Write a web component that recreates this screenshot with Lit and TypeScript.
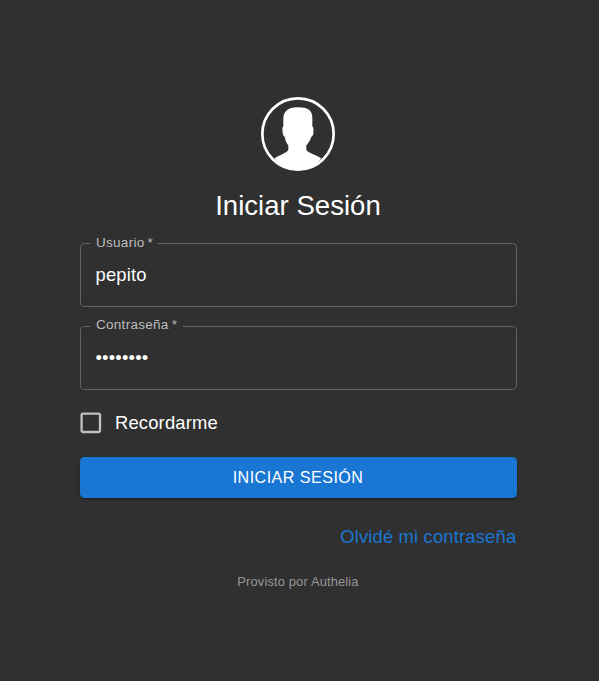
import { LitElement, html, css, svg } from "lit";
import { customElement, property } from "lit/decorators.js";

@customElement("outlined-field")
class OutlinedField extends LitElement {
  @property() label = "";
  @property() value = "";
  @property({ reflect: true }) type = "text";

  static styles = css`
    :host { display: block; position: relative; height: 64px; }
    .outline {
      position: absolute; left: 0; right: 0; top: -6px; bottom: 0;
      margin: 0; padding: 0 9px; box-sizing: border-box; min-width: 0;
      border: 1px solid #646464; border-radius: 4.6px; pointer-events: none;
    }
    .legend {
      padding: 0 5px 0 6px; height: 13px; line-height: 11px;
      font-size: 13.5px; letter-spacing: 0.28px; color: #bcbcbc; white-space: nowrap;
    }
    :host([type="password"]) .legend { line-height: 9px; padding-right: 6px; }
    .star { margin-left: -1px; }
    .input {
      display: block; box-sizing: border-box; width: 100%; height: 64px;
      margin: 0; padding: 0 15px 1px 15.5px; border: 0; outline: 0; background: transparent;
      color: #fff; font: 18.4px/26px "Liberation Sans", Arial, sans-serif;
      letter-spacing: 0.17px;
    }
  `;

  render() {
    return html`
      <fieldset class="outline"><legend class="legend">${this.label} <span class="star">*</span></legend></fieldset>
      <input class="input" .type=${this.type} .value=${this.value} aria-label=${this.label} />
    `;
  }
}

const userIcon = svg`
  <circle cx="144" cy="147" r="107" fill="none" stroke="#fff" stroke-width="8"/>
  <path fill="#fff" d="M144 67C128 67 117 70 109 77C102 83 100 91 100 101L100 124C96 127 97 134 98 143C99 150 101 153 104 155C106 167 110 174 115 181L115 195C110 203 89 210 73 220C91 243 117 256 144 256C171 256 197 243 214 220C199 210 174 203 169 195L169 181C175 174 181 166 184 155C188 153 190 149 190 143C191 134 191 127 187 124L187 99C187 89 184 81 178 75C170 69 159 67 144 67Z"/>`;

@customElement("app-root")
class AppRoot extends LitElement {
  static styles = css`
    :host {
      display: flex; justify-content: center; box-sizing: border-box;
      height: 681px; padding: 97px 2px 0 0; background: #303030; color: #fff;
      font-family: "Liberation Sans", Arial, sans-serif;
    }
    .form { display: flex; flex-direction: column; width: 437px; margin: 0; }
    .avatar { display: block; align-self: center; width: 74px; height: 74px; margin-right: 1.6px; }
    .title { margin: 16px 1px 19px 0; height: 37px; font-size: 27.6px; line-height: 37px; font-weight: 400; text-align: center; }
    .fields { display: grid; gap: 19px; }
    .remember { display: flex; align-items: center; height: 28px; margin-top: 19px; font-size: 18.4px; letter-spacing: 0.17px; }
    .box { width: 27.6px; height: 27.6px; margin: 0 10.6px 0 -3.2px; fill: #c1c1c1; }
    .submit {
      height: 41px; margin-top: 20px; padding: 0 1px 0 0; border: 0; border-radius: 4.6px;
      background: #1976d2; color: #fff; font: 16.1px/41px "Liberation Sans", Arial, sans-serif;
      letter-spacing: 0.46px; text-transform: uppercase;
      box-shadow: 0 3px 1px -2px rgba(0,0,0,.2), 0 2px 2px rgba(0,0,0,.14), 0 1px 5px rgba(0,0,0,.12);
    }
    .forgot { align-self: flex-end; margin: 25px 0.7px 0 0; color: #1976d2; font-size: 18.4px; line-height: 28px; letter-spacing: 0.17px; text-decoration: none; }
    .powered { margin: 21px 1px 0 0; color: #979797; font-size: 12.9px; line-height: 20px; letter-spacing: 0.15px; text-align: center; }
  `;

  render() {
    return html`
      <form class="form">
        <svg class="avatar" viewBox="33 36 222 222">${userIcon}</svg>
        <h1 class="title">Iniciar Sesión</h1>
        <div class="fields">
          <outlined-field label="Usuario" value="pepito"></outlined-field>
          <outlined-field label="Contraseña" value="password" type="password"></outlined-field>
        </div>
        <label class="remember">
          <svg class="box" viewBox="0 0 24 24"><path d="M19 5v14H5V5h14m0-2H5c-1.1 0-2 .9-2 2v14c0 1.1.9 2 2 2h14c1.1 0 2-.9 2-2V5c0-1.1-.9-2-2-2z"/></svg>
          <span>Recordarme</span>
        </label>
        <button class="submit" type="button">Iniciar sesión</button>
        <a class="forgot">Olvidé mi contraseña</a>
        <div class="powered">Provisto por Authelia</div>
      </form>
    `;
  }
}
